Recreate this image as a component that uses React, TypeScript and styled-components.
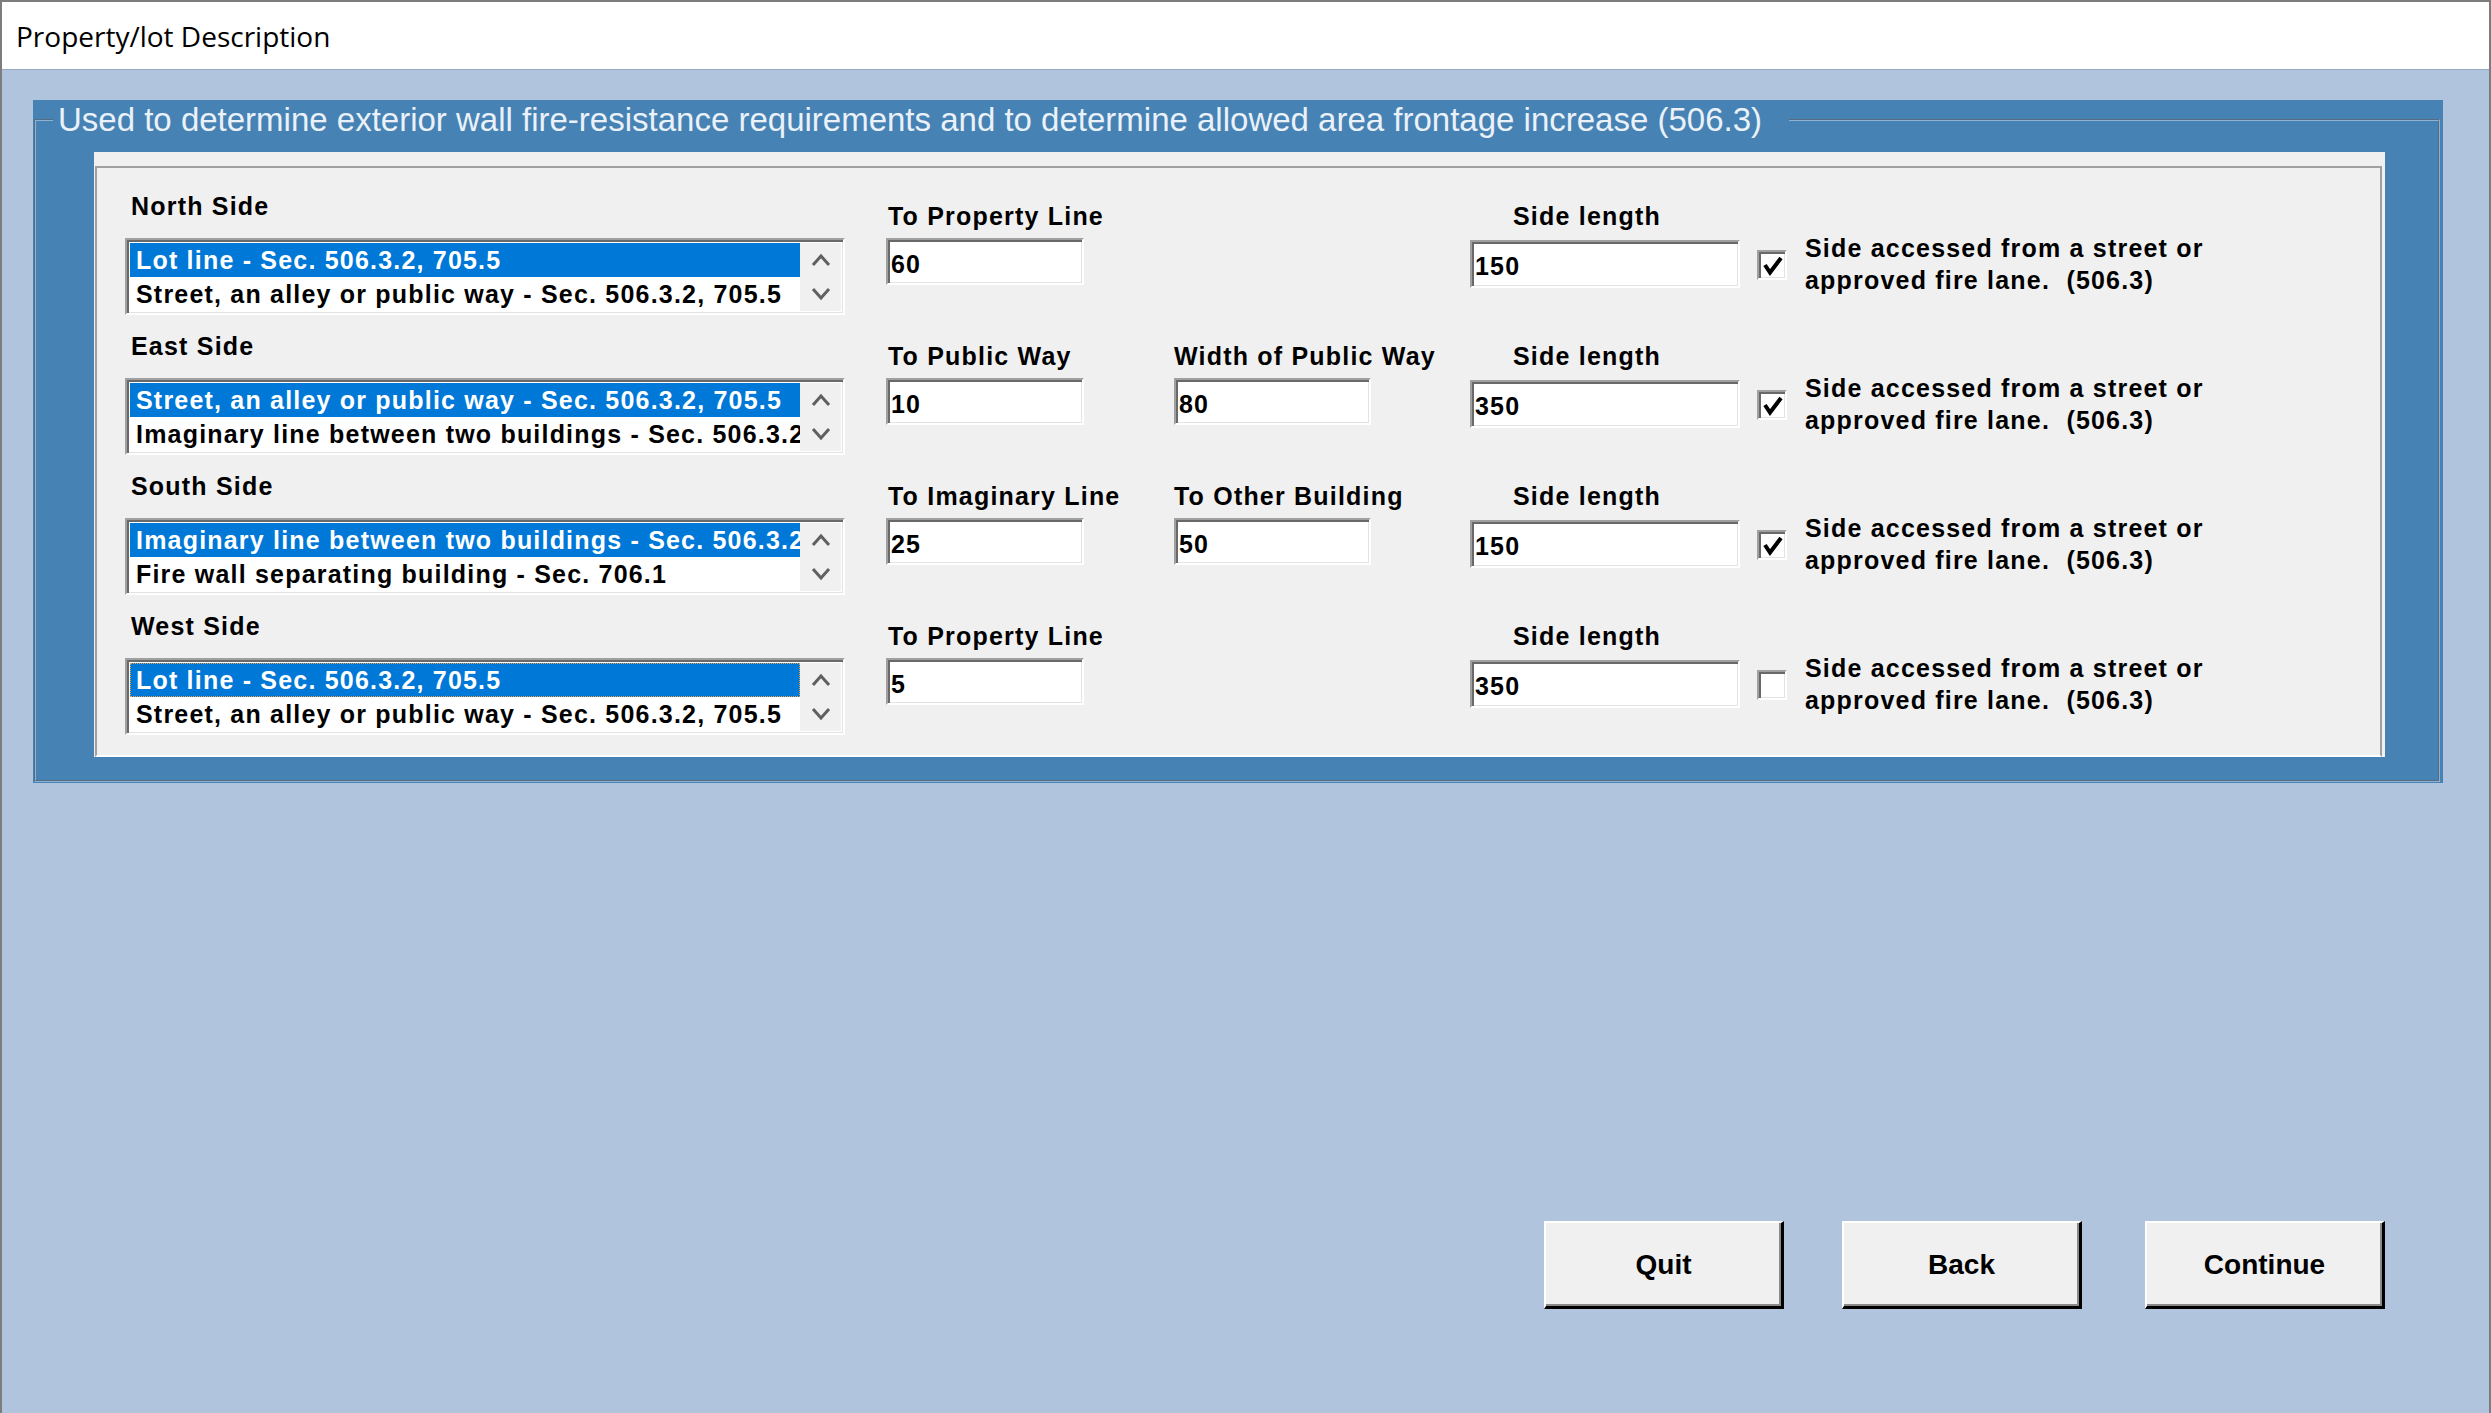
import React from "react";
import styled, { createGlobalStyle, css } from "styled-components";

const GlobalStyle = createGlobalStyle`
  html, body {
    margin: 0;
    padding: 0;
    background: #b0c4de;
  }
  body {
    font-family: "Liberation Sans", Arial, sans-serif;
  }
  * {
    box-sizing: border-box;
  }
`;

const sunken = css`
  border-style: solid;
  border-width: 2px;
  border-color: #a0a0a0 #ffffff #ffffff #a0a0a0;
  box-shadow: inset 2px 2px 0 #696969, inset -1px -1px 0 #e3e3e3;
  background: #ffffff;
`;

const boldText = css`
  font-family: "Liberation Sans", Arial, sans-serif;
  font-weight: bold;
  font-size: 25px;
  letter-spacing: 1.2px;
  color: #000;
`;

const Window = styled.div`
  width: 2491px;
  height: 1413px;
  display: flex;
  flex-direction: column;
  border: 2px solid #7d7d7d;
  border-bottom: none;
  background: #b0c4de;
`;

const TitleBar = styled.div`
  height: 68px;
  flex: none;
  display: flex;
  align-items: center;
  padding-left: 14px;
  background: #ffffff;
  border-bottom: 1px solid #97a8c3;
  font-family: "Open Sans", "Noto Sans", sans-serif;
  font-size: 28px;
  color: #000;
`;

const Body = styled.div`
  flex: 1;
  padding: 30px 44px 0 31px;
`;

const BluePanel = styled.div`
  width: 2410px;
  background: #4682b4;
  padding: 0 3px 1px 1px;
`;

const GroupBox = styled.fieldset`
  margin: 0;
  padding: 0;
  border: 2px groove #8fb2d3;
  min-width: 0;
`;

const Legend = styled.legend`
  margin-left: 17px;
  padding: 0 27px 0 5px;
  font-family: "Liberation Sans", Arial, sans-serif;
  font-size: 33px;
  line-height: 40px;
  color: #eaf1f8;
  white-space: nowrap;
`;

const InnerPanel = styled.div`
  width: 2291px;
  height: 605px;
  margin: 12px 0 23px 58px;
  padding: 14px 3px 0 1px;
  background: #f0f0f0;
`;

const Frame = styled.div`
  height: 100%;
  border: 2px solid #a0a0a0;
  border-bottom-color: #ffffff;
  display: flex;
  flex-direction: column;
`;

const Row = styled.div`
  height: 140px;
  flex: none;
  display: flex;
  align-items: flex-start;
  padding-left: 28px;
`;

const Cell = styled.div<{ $w: number; $ml?: number }>`
  width: ${(p) => p.$w}px;
  margin-left: ${(p) => p.$ml ?? 0}px;
  flex: none;
  display: flex;
  flex-direction: column;
`;

const SideLabel = styled.div`
  ${boldText};
  margin-top: 23px;
  line-height: 30px;
  padding-left: 6px;
`;

const FieldLabel = styled.div<{ $indent?: number }>`
  ${boldText};
  margin-top: 33px;
  line-height: 30px;
  white-space: nowrap;
  padding-left: ${(p) => p.$indent ?? 0}px;
`;

const ListBox = styled.div`
  ${sunken};
  margin-top: 17px;
  width: 720px;
  height: 77px;
  padding: 3px 2px 2px 3px;
  display: grid;
  grid-template-columns: 1fr 41px;
`;

const Items = styled.div`
  display: flex;
  flex-direction: column;
  overflow: hidden;
`;

const Item = styled.div<{ $selected?: boolean; $focus?: boolean }>`
  ${boldText};
  height: 34px;
  line-height: 34px;
  padding-left: 6px;
  white-space: nowrap;
  overflow: hidden;
  background: ${(p) => (p.$selected ? "#0078d7" : "transparent")};
  color: ${(p) => (p.$selected ? "#ffffff" : "#000000")};
  outline: ${(p) => (p.$focus ? "1px dotted #e8a048" : "none")};
  outline-offset: -1px;
`;

const ScrollBar = styled.div`
  background: #f0f0f0;
  display: flex;
  flex-direction: column;
`;

const Arrow = styled.div`
  height: 34px;
  display: flex;
  align-items: center;
  justify-content: center;
`;

const Field = styled.div<{ $h: number; $top: number }>`
  ${sunken};
  ${boldText};
  margin-top: ${(p) => p.$top}px;
  height: ${(p) => p.$h}px;
  line-height: 30px;
  padding: 9px 0 0 3px;
`;

const CheckCell = styled.div`
  margin-left: 17px;
  display: flex;
  align-items: flex-start;
`;

const CheckBox = styled.div`
  ${sunken};
  width: 30px;
  height: 30px;
  margin-top: 82px;
  flex: none;
  display: flex;
`;

const CheckText = styled.div`
  ${boldText};
  margin-top: 64px;
  margin-left: 18px;
  line-height: 32px;
  white-space: pre;
`;

const Footer = styled.div`
  display: flex;
  justify-content: flex-end;
  margin-top: 438px;
  padding-right: 60px;
`;

const Button = styled.button<{ $gap?: number }>`
  width: 240px;
  height: 88px;
  margin-left: ${(p) => p.$gap ?? 0}px;
  padding: 0;
  background: #f0f0f0;
  border-style: solid;
  border-width: 2px 3px 3px 2px;
  border-color: #ffffff #000000 #000000 #ffffff;
  box-shadow: inset -2px -2px 0 #8a8a8a;
  font-family: "Liberation Sans", Arial, sans-serif;
  font-weight: bold;
  font-size: 28px;
  color: #000;
`;

type Side = {
  name: string;
  items: string[];
  a: { label: string; value: string };
  b?: { label: string; value: string };
  length: string;
  checked: boolean;
  focus?: boolean;
};

const LOT = "Lot line - Sec. 506.3.2, 705.5";
const STREET = "Street, an alley or public way - Sec. 506.3.2, 705.5";
const IMAGINARY = "Imaginary line between two buildings - Sec. 506.3.2, 705.5";

const sides: Side[] = [
  {
    name: "North Side",
    items: [LOT, STREET],
    a: { label: "To Property Line", value: "60" },
    length: "150",
    checked: true,
  },
  {
    name: "East Side",
    items: [STREET, IMAGINARY],
    a: { label: "To Public Way", value: "10" },
    b: { label: "Width of Public Way", value: "80" },
    length: "350",
    checked: true,
  },
  {
    name: "South Side",
    items: [IMAGINARY, "Fire wall separating building - Sec. 706.1"],
    a: { label: "To Imaginary Line", value: "25" },
    b: { label: "To Other Building", value: "50" },
    length: "150",
    checked: true,
  },
  {
    name: "West Side",
    items: [LOT, STREET],
    a: { label: "To Property Line", value: "5" },
    length: "350",
    checked: false,
    focus: true,
  },
];

function Chevron({ up }: { up?: boolean }) {
  return (
    <svg width="20" height="14" viewBox="0 0 20 14">
      <polyline
        points={up ? "2,12 10,3 18,12" : "2,2 10,11 18,2"}
        fill="none"
        stroke="#606060"
        strokeWidth="3"
      />
    </svg>
  );
}

function Check() {
  return (
    <svg width="26" height="26" viewBox="0 0 26 26">
      <path d="M6 13 L11 20.5 L22 6" fill="none" stroke="#000" strokeWidth="4" />
    </svg>
  );
}

function SideRow({ side }: { side: Side }) {
  return (
    <Row>
      <Cell $w={720}>
        <SideLabel>{side.name}</SideLabel>
        <ListBox>
          <Items>
            {side.items.map((it, i) => (
              <Item key={i} $selected={i === 0} $focus={i === 0 && side.focus}>
                {it}
              </Item>
            ))}
          </Items>
          <ScrollBar>
            <Arrow>
              <Chevron up />
            </Arrow>
            <Arrow>
              <Chevron />
            </Arrow>
          </ScrollBar>
        </ListBox>
      </Cell>
      <Cell $w={198} $ml={41}>
        <FieldLabel $indent={2}>{side.a.label}</FieldLabel>
        <Field $h={47} $top={7}>
          {side.a.value}
        </Field>
      </Cell>
      <Cell $w={197} $ml={90}>
        {side.b && (
          <>
            <FieldLabel $indent={-4}>{side.b.label}</FieldLabel>
            <Field $h={47} $top={7}>
              {side.b.value}
            </Field>
          </>
        )}
      </Cell>
      <Cell $w={270} $ml={99}>
        <FieldLabel $indent={43}>Side length</FieldLabel>
        <Field $h={48} $top={9}>
          {side.length}
        </Field>
      </Cell>
      <CheckCell>
        <CheckBox>{side.checked && <Check />}</CheckBox>
        <CheckText>
          {"Side accessed from a street or\napproved fire lane.  (506.3)"}
        </CheckText>
      </CheckCell>
    </Row>
  );
}

export default function App() {
  return (
    <>
      <GlobalStyle />
      <Window>
        <TitleBar>Property/lot Description</TitleBar>
        <Body>
          <BluePanel>
            <GroupBox>
              <Legend>
                Used to determine exterior wall fire-resistance requirements and
                to determine allowed area frontage increase (506.3)
              </Legend>
              <InnerPanel>
                <Frame>
                  {sides.map((s) => (
                    <SideRow key={s.name} side={s} />
                  ))}
                </Frame>
              </InnerPanel>
            </GroupBox>
          </BluePanel>
          <Footer>
            <Button>Quit</Button>
            <Button $gap={58}>Back</Button>
            <Button $gap={63}>Continue</Button>
          </Footer>
        </Body>
      </Window>
    </>
  );
}
